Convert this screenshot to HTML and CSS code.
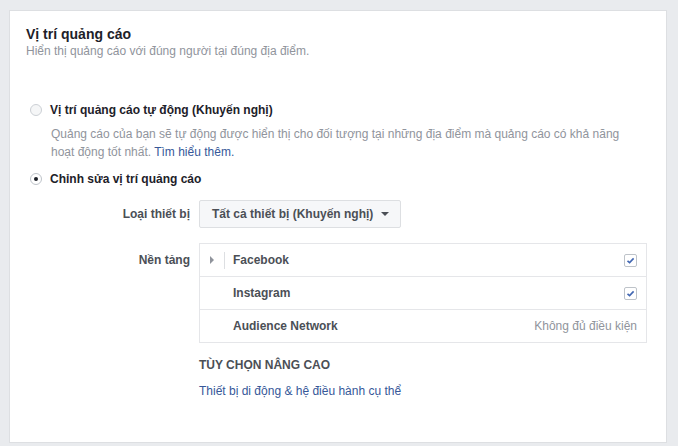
FILE: index.html
```html
<!DOCTYPE html>
<html lang="vi">
<head>
    <meta charset="UTF-8">
    <title>Vị trí quảng cáo</title>
    <link rel="stylesheet" href="styles.css">
</head>
<body>
<div class="card">
    <div class="header">
        <h2 class="title">Vị trí quảng cáo</h2>
        <div class="subtitle">Hiển thị quảng cáo với đúng người tại đúng địa điểm.</div>
    </div>

    <div class="options">
        <label class="option">
            <span class="radio"></span><span class="option-label">Vị trí quảng cáo tự động (Khuyến nghị)</span>
        </label>
        <div class="option-desc">
            Quảng cáo của bạn sẽ tự động được hiển thị cho đối tượng tại những địa điểm mà quảng cáo có khả năng<br>hoạt động tốt nhất. <a href="#" class="link">Tìm hiểu thêm.</a>
        </div>
        <label class="option option-last">
            <span class="radio checked"></span><span class="option-label">Chỉnh sửa vị trí quảng cáo</span>
        </label>
    </div>

    <div class="form-row row-device">
        <div class="form-label">Loại thiết bị</div>
        <div class="form-field">
            <button class="dropdown" type="button">Tất cả thiết bị (Khuyến nghị)<em class="caret"></em></button>
        </div>
    </div>

    <div class="form-row row-platform">
        <div class="form-label">Nền tảng</div>
        <div class="form-field">
            <ul class="platforms">
                <li>
                    <span class="expander"><em></em></span>
                    <span class="name">Facebook</span>
                    <span class="check">
                        <svg width="13" height="13" viewBox="0 0 13 13"><path d="M3.5 6.8 L5.6 8.6 L9.6 4.4" fill="none" stroke="#4267b2" stroke-width="1.6"/></svg>
                    </span>
                </li>
                <li>
                    <span class="expander blank"></span>
                    <span class="name">Instagram</span>
                    <span class="check">
                        <svg width="13" height="13" viewBox="0 0 13 13"><path d="M3.5 6.8 L5.6 8.6 L9.6 4.4" fill="none" stroke="#4267b2" stroke-width="1.6"/></svg>
                    </span>
                </li>
                <li>
                    <span class="expander blank"></span>
                    <span class="name">Audience Network</span>
                    <span class="status">Không đủ điều kiện</span>
                </li>
            </ul>

            <div class="advanced">
                <div class="advanced-title">TÙY CHỌN NÂNG CAO</div>
                <a href="#" class="link advanced-link">Thiết bị di động &amp; hệ điều hành cụ thể</a>
            </div>
        </div>
    </div>
</div>
</body>
</html>
```

FILE: styles.css
```css
*{
    margin: 0;
    padding: 0;
    box-sizing: border-box;
}

body{
    padding: 10px 11px 0 9px;
    background: #e9ebee;
    font-family: "Liberation Sans", Helvetica, Arial, sans-serif;
    font-size: 12px;
    line-height: 16px;
    color: #1d2129;
}

ul{
    list-style: none;
}

a{
    text-decoration: none;
}

.card{
    background: #fff;
    border: 1px solid #dddfe2;
    padding: 14px 16px 43px 16px;
}

.title{
    font-size: 14px;
    line-height: 18px;
    font-weight: bold;
    color: #1d2129;
}
.subtitle{
    color: #90949c;
}

/* radio options */
.options{
    margin-top: 43px;
}
.option{
    display: flex;
    align-items: center;
    cursor: pointer;
}
.option-last{
    margin-top: 10px;
}
.radio{
    position: relative;
    width: 12px;
    height: 12px;
    margin: 0 8px 0 4px;
    border: 1px solid #ccd0d5;
    border-radius: 50%;
    background: #f5f6f7;
}
.radio.checked{
    background: #fff;
    border-color: #bec3c9;
}
.radio.checked:after{
    content: "";
    position: absolute;
    left: 3px;
    top: 3px;
    width: 4px;
    height: 4px;
    border-radius: 50%;
    background: #1d2129;
}
.option-label{
    font-weight: bold;
}
.option-desc{
    margin-top: 7px;
    padding-left: 25px;
    line-height: 18px;
    color: #90949c;
}
.link{
    color: #365899;
}

/* form rows */
.form-row{
    display: flex;
    align-items: flex-start;
}
.form-label{
    width: 164px;
    margin-right: 9px;
    text-align: right;
    font-weight: bold;
    color: #4b4f56;
}
.row-device{
    margin-top: 13px;
}
.row-device .form-label{
    line-height: 28px;
}
.row-platform{
    margin-top: 15px;
}
.row-platform .form-label{
    padding-top: 1px;
    line-height: 32px;
}

.dropdown{
    display: flex;
    align-items: center;
    height: 28px;
    padding: 0 11px 0 12px;
    border: 1px solid #dddfe2;
    border-radius: 2px;
    background: #f6f7f9;
    font-family: inherit;
    font-size: 12px;
    font-weight: bold;
    color: #4b4f56;
    cursor: pointer;
}
.caret{
    margin-left: 8px;
    width: 0;
    height: 0;
    border-top: 4px solid #4b4f56;
    border-left: 4px solid transparent;
    border-right: 4px solid transparent;
}

/* platforms list */
.platforms{
    width: 448px;
    border: 1px solid #e5e6e9;
}
.platforms li{
    display: flex;
    align-items: center;
    height: 33px;
    padding-right: 9px;
    border-bottom: 1px solid #e5e6e9;
}
.platforms li:last-child{
    height: 32px;
    border-bottom: 0;
}
.expander{
    display: flex;
    align-items: center;
    justify-content: center;
    width: 25px;
    height: 17px;
    border-right: 1px solid #dddfe2;
}
.expander.blank{
    border-right-color: transparent;
}
.expander em{
    width: 0;
    height: 0;
    border-left: 4px solid #90949c;
    border-top: 4px solid transparent;
    border-bottom: 4px solid transparent;
}
.name{
    flex: 1;
    margin-left: 8px;
    font-weight: bold;
    color: #4b4f56;
}
.check{
    width: 13px;
    height: 13px;
    border: 1px solid #bec3c9;
    border-radius: 2px;
    background: #fff;
}
.check svg{
    display: block;
    margin: -1px;
}
.status{
    color: #90949c;
}

.advanced{
    margin-top: 14px;
}
.advanced-title{
    font-weight: bold;
    color: #4b4f56;
}
.advanced-link{
    display: block;
    margin-top: 10px;
}
```
